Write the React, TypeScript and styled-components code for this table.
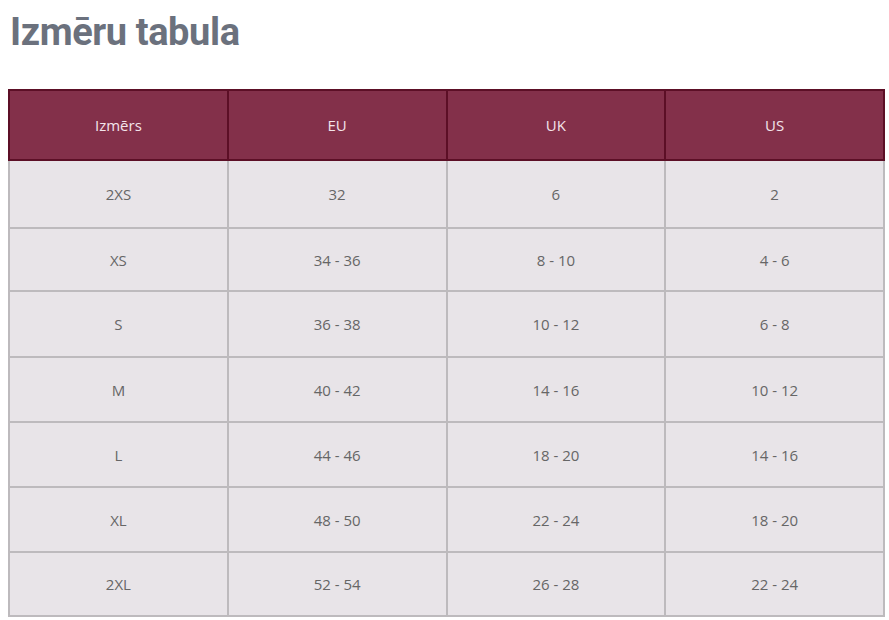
import React from "react";
import styled, { createGlobalStyle } from "styled-components";

const Global = createGlobalStyle`
  html, body { margin: 0; padding: 0; background: #ffffff; }
  body { padding: 0 4px 0 8px; }
`;

const Title = styled.h1`
  margin: 0;
  padding: 10px 0 0 2px;
  height: 89px;
  box-sizing: border-box;
  font-family: Roboto, "Liberation Sans", sans-serif;
  font-weight: 700;
  font-size: 38px;
  line-height: 44px;
  letter-spacing: -0.4px;
  color: #6b717d;
`;

const Table = styled.table`
  width: 877px;
  border-collapse: collapse;
  table-layout: fixed;
  font-family: "Open Sans", "Noto Sans", sans-serif;
  font-size: 15px;
`;

const HeadCell = styled.th`
  background: #83304a;
  color: #f3e4ea;
  font-weight: 400;
  height: 68px;
  border: 2px solid #5c0f26;
  text-align: center;
  padding: 0;
`;

const Cell = styled.td<{ $h: number }>`
  background: #e8e4e8;
  color: #666;
  height: ${(p) => p.$h}px;
  border: 2px solid #bdbabd;
  text-align: center;
  padding: 0;
`;

const heads = ["Izmērs", "EU", "UK", "US"];
const rows: { h: number; v: string[] }[] = [
  { h: 66, v: ["2XS", "32", "6", "2"] },
  { h: 61, v: ["XS", "34 - 36", "8 - 10", "4 - 6"] },
  { h: 64, v: ["S", "36 - 38", "10 - 12", "6 - 8"] },
  { h: 63, v: ["M", "40 - 42", "14 - 16", "10 - 12"] },
  { h: 63, v: ["L", "44 - 46", "18 - 20", "14 - 16"] },
  { h: 63, v: ["XL", "48 - 50", "22 - 24", "18 - 20"] },
  { h: 62, v: ["2XL", "52 - 54", "26 - 28", "22 - 24"] },
];

export default function App() {
  return (
    <>
      <Global />
      <Title>Izmēru tabula</Title>
      <Table>
        <thead>
          <tr>
            {heads.map((h) => (
              <HeadCell key={h}>{h}</HeadCell>
            ))}
          </tr>
        </thead>
        <tbody>
          {rows.map((r) => (
            <tr key={r.v[0]}>
              {r.v.map((c, i) => (
                <Cell key={i} $h={r.h}>
                  {c}
                </Cell>
              ))}
            </tr>
          ))}
        </tbody>
      </Table>
    </>
  );
}
